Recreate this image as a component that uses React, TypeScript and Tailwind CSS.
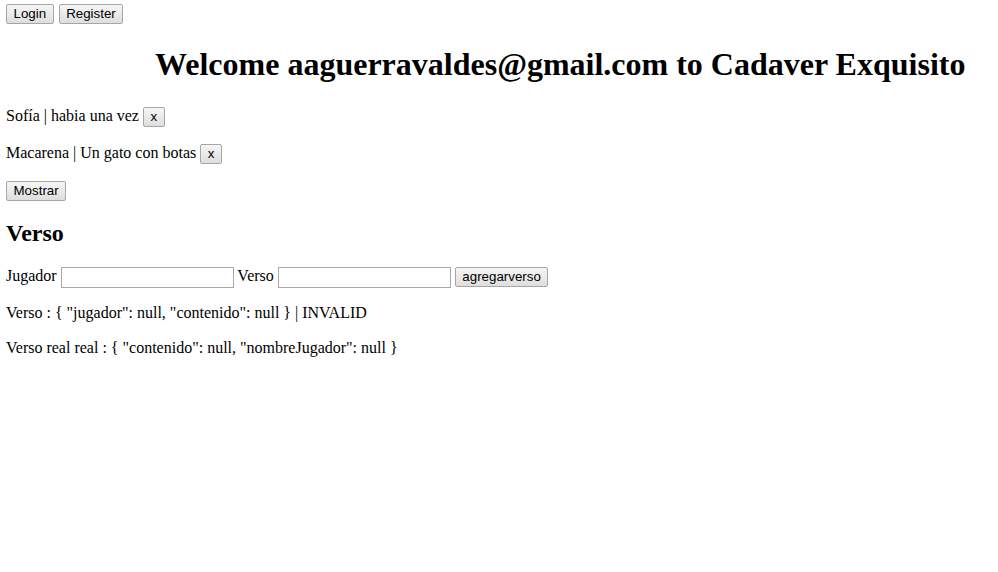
import React from "react";

const btn =
  "font-['Liberation_Sans',Arial,sans-serif] text-[13.33px] leading-[16px] px-[6.5px] py-[1px] border border-[#a6a6a6] rounded-[2px] bg-gradient-to-b from-[#f6f6f6] to-[#dedede] text-black align-baseline";

const field = "w-[173px] h-[21px] border border-[#a9a9a9] bg-white align-baseline px-1 text-[13px]";

export default function App() {
  return (
    <div className="min-h-[572px] bg-white text-black font-['Liberation_Serif','Times_New_Roman',serif] text-[16px] leading-[18.4px] px-[6px] pt-[4px]">
      <div className="flex gap-[5px]">
        <button className={btn}>Login</button>
        <button className={btn}>Register</button>
      </div>

      <h1 className="mt-[22px] mb-[22px] pl-[149px] text-[32px] leading-[37px] font-bold">
        Welcome aaguerravaldes@gmail.com to Cadaver Exquisito
      </h1>

      <p className="mb-[15px] leading-[22px]">
        Sofía | habia una vez <button className={btn}>x</button>
      </p>
      <p className="mb-[15px] leading-[22px]">
        Macarena | Un gato con botas <button className={btn}>x</button>
      </p>
      <p className="leading-[22px]">
        <button className={btn}>Mostrar</button>
      </p>

      <h2 className="mt-[18px] mb-[18px] text-[24px] leading-[28px] font-bold">Verso</h2>

      <form className="leading-[22px]" onSubmit={(e) => e.preventDefault()}>
        Jugador <input className={field} /> Verso <input className={field} />{" "}
        <button className={btn}>agregarverso</button>
      </form>

      <p className="mt-[16px]">Verso : {'{ "jugador": null, "contenido": null }'} | INVALID</p>
      <p className="mt-[17px]">Verso real real : {'{ "contenido": null, "nombreJugador": null }'}</p>
    </div>
  );
}
